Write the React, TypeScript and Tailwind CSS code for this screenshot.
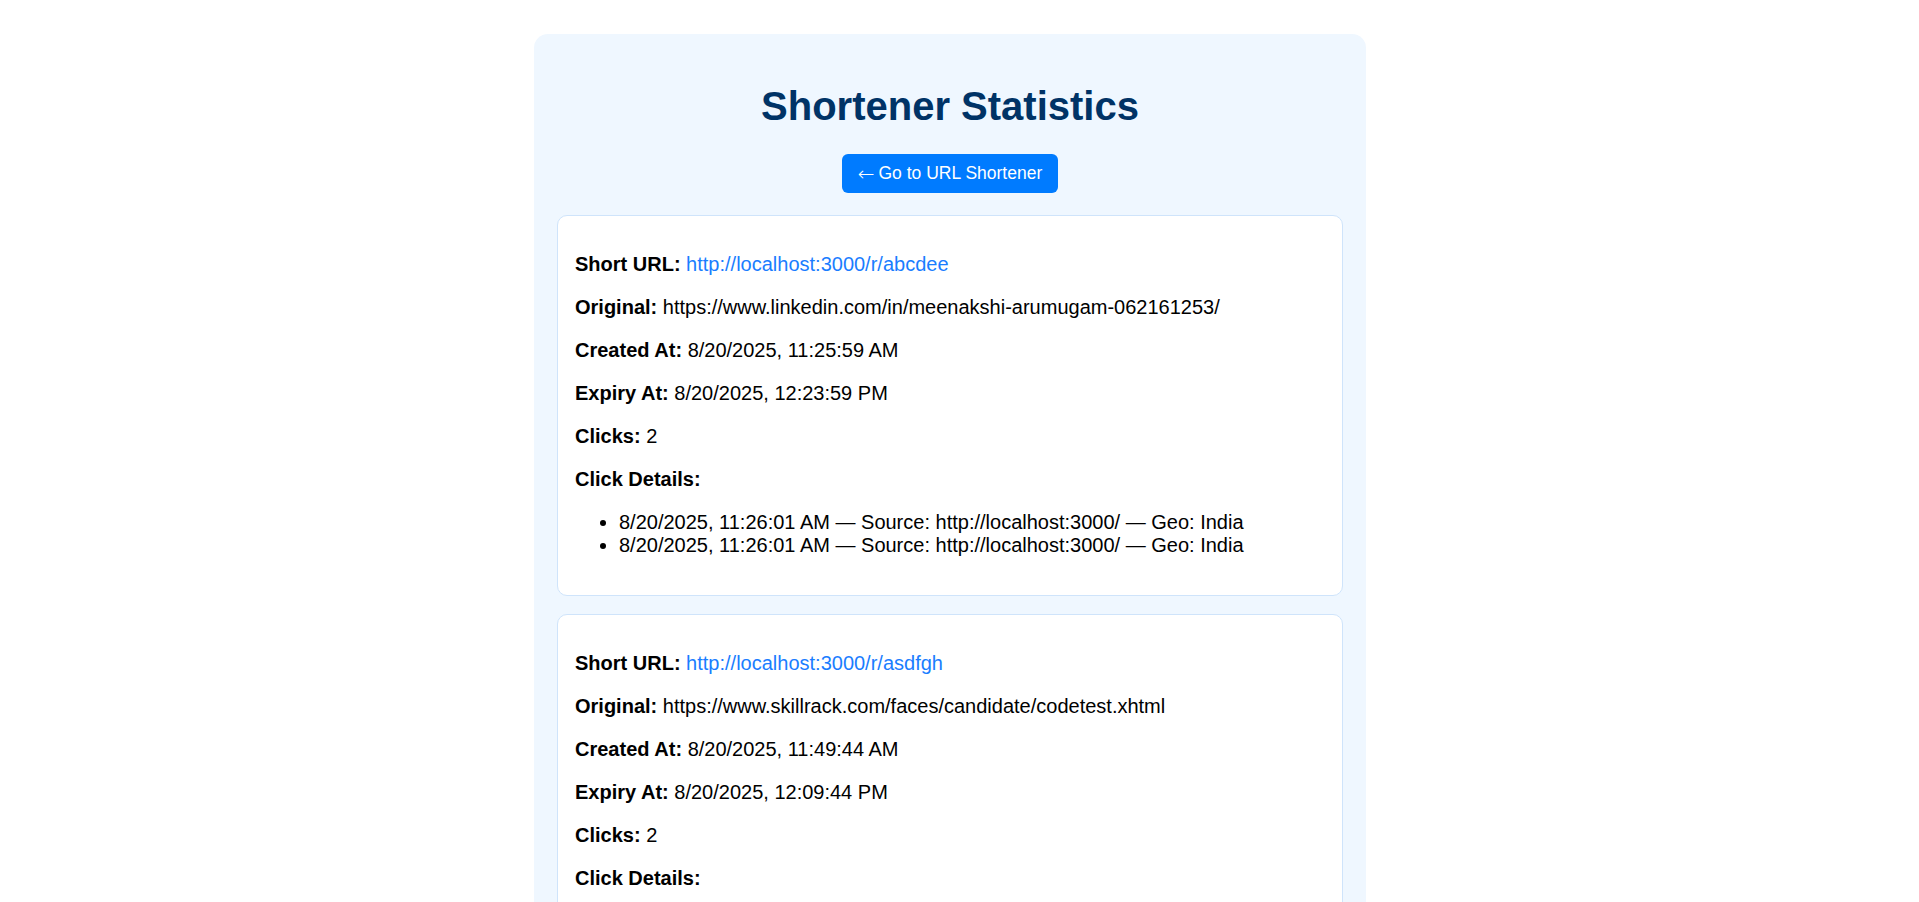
import { FC } from 'react'

interface ClickInfo {
  time: string
  source: string
  geo: string
}

interface UrlStat {
  shortUrl: string
  original: string
  createdAt: string
  expiryAt: string
  clicks: ClickInfo[]
}

const stats: UrlStat[] = [
  {
    shortUrl: 'http://localhost:3000/r/abcdee',
    original: 'https://www.linkedin.com/in/meenakshi-arumugam-062161253/',
    createdAt: '8/20/2025, 11:25:59 AM',
    expiryAt: '8/20/2025, 12:23:59 PM',
    clicks: [
      { time: '8/20/2025, 11:26:01 AM', source: 'http://localhost:3000/', geo: 'India' },
      { time: '8/20/2025, 11:26:01 AM', source: 'http://localhost:3000/', geo: 'India' }
    ]
  },
  {
    shortUrl: 'http://localhost:3000/r/asdfgh',
    original: 'https://www.skillrack.com/faces/candidate/codetest.xhtml',
    createdAt: '8/20/2025, 11:49:44 AM',
    expiryAt: '8/20/2025, 12:09:44 PM',
    clicks: [
      { time: '8/20/2025, 11:49:47 AM', source: 'http://localhost:3000/', geo: 'India' },
      { time: '8/20/2025, 11:49:47 AM', source: 'http://localhost:3000/', geo: 'India' }
    ]
  },
  {
    shortUrl: 'http://localhost:3000/r/qwerty',
    original: 'https://www.google.com/',
    createdAt: '8/20/2025, 11:52:10 AM',
    expiryAt: '8/20/2025, 12:22:10 PM',
    clicks: [
      { time: '8/20/2025, 11:52:14 AM', source: 'http://localhost:3000/', geo: 'India' },
      { time: '8/20/2025, 11:52:14 AM', source: 'http://localhost:3000/', geo: 'India' }
    ]
  },
  {
    shortUrl: 'http://localhost:3000/r/zxcvbn',
    original: 'https://github.com/',
    createdAt: '8/20/2025, 11:55:02 AM',
    expiryAt: '8/20/2025, 12:25:02 PM',
    clicks: [
      { time: '8/20/2025, 11:55:06 AM', source: 'http://localhost:3000/', geo: 'India' },
      { time: '8/20/2025, 11:55:06 AM', source: 'http://localhost:3000/', geo: 'India' }
    ]
  },
  {
    shortUrl: 'http://localhost:3000/r/mnbvcx',
    original: 'https://www.youtube.com/',
    createdAt: '8/20/2025, 11:58:31 AM',
    expiryAt: '8/20/2025, 12:28:31 PM',
    clicks: [
      { time: '8/20/2025, 11:58:35 AM', source: 'http://localhost:3000/', geo: 'India' },
      { time: '8/20/2025, 11:58:35 AM', source: 'http://localhost:3000/', geo: 'India' }
    ]
  },
  {
    shortUrl: 'http://localhost:3000/r/lkjhgf',
    original: 'https://stackoverflow.com/',
    createdAt: '8/20/2025, 12:01:12 PM',
    expiryAt: '8/20/2025, 12:31:12 PM',
    clicks: [
      { time: '8/20/2025, 12:01:15 PM', source: 'http://localhost:3000/', geo: 'India' },
      { time: '8/20/2025, 12:01:15 PM', source: 'http://localhost:3000/', geo: 'India' }
    ]
  },
  {
    shortUrl: 'http://localhost:3000/r/poiuyt',
    original: 'https://developer.mozilla.org/',
    createdAt: '8/20/2025, 12:04:40 PM',
    expiryAt: '8/20/2025, 12:34:40 PM',
    clicks: [
      { time: '8/20/2025, 12:04:44 PM', source: 'http://localhost:3000/', geo: 'India' },
      { time: '8/20/2025, 12:04:44 PM', source: 'http://localhost:3000/', geo: 'India' }
    ]
  }
]

const Row: FC<{ label: string; children: React.ReactNode }> = ({ label, children }) => (
  <p className="my-[20px] leading-[23px]">
    <strong className="font-bold">{label}</strong> {children}
  </p>
)

const StatCard: FC<{ stat: UrlStat }> = ({ stat }) => {
  return (
    <div className="rounded-[10px] border border-[#cfe4fb] bg-white px-[17px] pb-[18px] pt-[17px]">
      <Row label="Short URL:">
        <a href={stat.shortUrl} className="text-[#1a7dff]">
          {stat.shortUrl}
        </a>
      </Row>
      <Row label="Original:">{stat.original}</Row>
      <Row label="Created At:">{stat.createdAt}</Row>
      <Row label="Expiry At:">{stat.expiryAt}</Row>
      <Row label="Clicks:">{stat.clicks.length}</Row>
      <Row label="Click Details:">{null}</Row>
      <ul className="my-[20px] list-disc pl-[44px] leading-[23px]">
        {stat.clicks.map((c, i) => (
          <li key={i}>
            {c.time} — Source: {c.source} — Geo: {c.geo}
          </li>
        ))}
      </ul>
    </div>
  )
}

const App: FC = () => {
  return (
    <div className="min-h-screen bg-white pb-[34px] pr-[19px] pt-[34px] font-['Liberation_Sans',Arial,sans-serif] text-[20px] text-black">
      <div className="mx-auto w-[832px] rounded-[14px] bg-[#eff7ff] px-[23px] pb-[23px] pt-[50px]">
        <h1 className="mb-[25px] text-center text-[40px] font-bold leading-[45px] text-[#003366]">
          Shortener Statistics
        </h1>
        <div className="mb-[22px] flex justify-center">
          <button className="flex h-[39px] items-center rounded-[6px] bg-[#007bff] px-[16px] text-[17.5px] text-white">
            <span className="mr-[4px] font-['DejaVu_Sans',sans-serif] text-[20px] font-light leading-none">←</span>
            Go to URL Shortener
          </button>
        </div>
        <div className="flex flex-col gap-[18px]">
          {stats.map((s, i) => (
            <StatCard key={i} stat={s} />
          ))}
        </div>
      </div>
    </div>
  )
}

export default App
